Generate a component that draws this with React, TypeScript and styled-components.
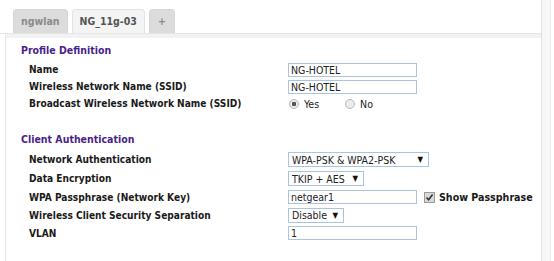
import React from 'react';
import styled, { createGlobalStyle } from 'styled-components';

const FONT = "'DejaVu Sans Condensed', 'DejaVu Sans', Verdana, sans-serif";

const GlobalStyle = createGlobalStyle`
  html, body {
    margin: 0;
    padding: 0;
    background: #ffffff;
  }
  body {
    font-family: ${FONT};
    font-size: 10.5px;
    color: #222;
  }
`;

const Page = styled.div`
  display: flex;
  width: 554px;
  height: 261px;
  overflow: hidden;
`;

const Main = styled.div`
  flex: 1;
  display: flex;
  flex-direction: column;
`;

const Scroller = styled.div`
  width: 8px;
  margin-right: 3px;
  border-left: 1px solid #e2e2e2;
  border-right: 1px solid #ececec;
  background: #f7f7f7;
`;

const TabBar = styled.div`
  display: flex;
  gap: 4px;
  padding: 9px 0 0 13px;
  border-bottom: 1px solid #e6e6e6;
`;

const Tab = styled.div<{ $active?: boolean; $narrow?: boolean }>`
  height: 23px;
  line-height: 23px;
  padding: 0 ${p => (p.$narrow ? '8px' : '7px')};
  border-radius: 4px 4px 0 0;
  border: 1px solid ${p => (p.$active ? '#e3e3e3' : '#d6d6d6')};
  border-bottom: none;
  background: ${p => (p.$active ? '#f4f4f4' : '#dcdcdc')};
  color: ${p => (p.$active ? '#555' : '#8a8a8a')};
  font-weight: bold;
  font-size: 10.5px;
`;

const Panel = styled.div`
  flex: 1;
  margin-left: 5px;
  border-left: 1px solid #e3e3e3;
  border-top: 4px solid #f2f2f2;
  padding: 4px 0 0 15px;
`;

const Section = styled.div`
  margin-bottom: 19px;
`;

const Heading = styled.div`
  color: #4a1f8a;
  font-weight: bold;
  font-size: 10.5px;
  height: 17px;
  line-height: 17px;
  margin-bottom: 2px;
`;

const Row = styled.div<{ $h?: number }>`
  display: grid;
  grid-template-columns: 259px auto;
  align-items: center;
  height: ${p => p.$h || 17}px;
  padding-left: 8px;
  white-space: nowrap;
`;

const Label = styled.div`
  font-weight: bold;
  font-size: 10.1px;
  color: #1a1a1a;
`;

const Controls = styled.div`
  display: flex;
  align-items: center;
`;

const TextBox = styled.input`
  box-sizing: border-box;
  width: 129px;
  height: 14px;
  padding: 0 2px;
  border: 1px solid #a8c4e0;
  font-family: ${FONT};
  font-size: 10.5px;
  color: #222;
  outline: none;
`;

const Select = styled.div<{ $w: number }>`
  box-sizing: border-box;
  width: ${p => p.$w}px;
  height: 15px;
  padding: 0 5px 0 3px;
  border: 1px solid #a8c4e0;
  display: flex;
  align-items: center;
  justify-content: space-between;
  color: #222;
`;

const Arrow = styled.span`
  font-size: 8px;
  color: #111;
`;

const RadioLabel = styled.label`
  display: inline-flex;
  align-items: center;
  gap: 5px;
  margin-right: 25px;
  margin-left: 1px;
  color: #222;
`;

const Radio = styled.span<{ $on?: boolean }>`
  box-sizing: border-box;
  width: 10px;
  height: 10px;
  border-radius: 50%;
  border: 1px solid #b8b8b8;
  background: ${p => (p.$on ? 'radial-gradient(circle, #555 0 2px, #e8e8e8 2.5px)' : '#ececec')};
`;

const CheckLabel = styled.label`
  display: inline-flex;
  align-items: center;
  gap: 4px;
  margin-left: 7px;
  font-weight: bold;
  font-size: 10.6px;
  color: #1a1a1a;
`;

const CheckBox = styled.span`
  box-sizing: border-box;
  width: 11px;
  height: 11px;
  border: 1px solid #9a9a9a;
  background: #d8d8d8;
  display: flex;
  align-items: center;
  justify-content: center;
`;

export default function App() {
  return (
    <Page>
      <GlobalStyle />
      <Main>
        <TabBar>
          <Tab>ngwlan</Tab>
          <Tab $active>NG_11g-03</Tab>
          <Tab $narrow>+</Tab>
        </TabBar>
        <Panel>
          <Section>
            <Heading>Profile Definition</Heading>
            <Row>
              <Label>Name</Label>
              <Controls><TextBox defaultValue="NG-HOTEL" /></Controls>
            </Row>
            <Row>
              <Label>Wireless Network Name (SSID)</Label>
              <Controls><TextBox defaultValue="NG-HOTEL" /></Controls>
            </Row>
            <Row>
              <Label>Broadcast Wireless Network Name (SSID)</Label>
              <Controls>
                <RadioLabel><Radio $on />Yes</RadioLabel>
                <RadioLabel><Radio />No</RadioLabel>
              </Controls>
            </Row>
          </Section>
          <Section>
            <Heading>Client Authentication</Heading>
            <Row $h={19}>
              <Label>Network Authentication</Label>
              <Controls>
                <Select $w={141}>WPA-PSK &amp; WPA2-PSK<Arrow>▼</Arrow></Select>
              </Controls>
            </Row>
            <Row $h={19}>
              <Label>Data Encryption</Label>
              <Controls>
                <Select $w={76}>TKIP + AES<Arrow>▼</Arrow></Select>
              </Controls>
            </Row>
            <Row $h={18}>
              <Label>WPA Passphrase (Network Key)</Label>
              <Controls>
                <TextBox defaultValue="netgear1" />
                <CheckLabel>
                  <CheckBox>
                    <svg width="9" height="9" viewBox="0 0 9 9">
                      <path d="M1.5 4.5 L3.6 6.8 L7.6 1.6" fill="none" stroke="#333" strokeWidth="1.6" />
                    </svg>
                  </CheckBox>
                  Show Passphrase
                </CheckLabel>
              </Controls>
            </Row>
            <Row $h={18}>
              <Label>Wireless Client Security Separation</Label>
              <Controls>
                <Select $w={56}>Disable<Arrow>▼</Arrow></Select>
              </Controls>
            </Row>
            <Row $h={18}>
              <Label>VLAN</Label>
              <Controls><TextBox defaultValue="1" /></Controls>
            </Row>
          </Section>
        </Panel>
      </Main>
      <Scroller />
    </Page>
  );
}
